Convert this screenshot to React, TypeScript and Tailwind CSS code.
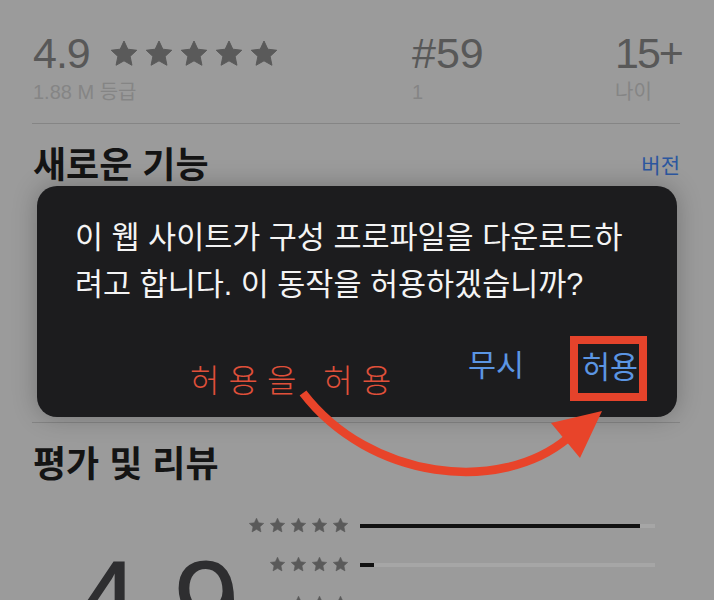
import React from "react";

const Star = ({ size, color }: { size: number; color: string }) => (
  <svg width={size} height={size} viewBox="0 0 24 24">
    <path
      d="M12 1.6l3.05 6.55 7.15.85-5.3 4.9 1.45 7.1L12 17.45 5.65 21l1.45-7.1-5.3-4.9 7.15-.85z"
      fill={color}
      stroke={color}
      strokeWidth="0.8"
      strokeLinejoin="round"
    />
  </svg>
);

const StarRow = ({ n }: { n: number }) => (
  <div className="flex justify-end gap-[4px]">
    {Array.from({ length: n }).map((_, i) => (
      <Star key={i} size={17} color="#5a5a5a" />
    ))}
  </div>
);

export default function App() {
  return (
    <div className="relative w-[714px] h-[600px] overflow-hidden bg-[#9b9b9b] font-['Liberation_Sans','Noto_Sans_CJK_KR',sans-serif]">
      <div className="px-[33px] pt-[32px]">
        {/* Stats row */}
        <div className="grid grid-cols-[379px_203px_1fr] pb-[21px] border-b border-[#858585] mr-[1px] -ml-[1px] pl-[1px]">
          <div>
            <div className="flex items-center gap-[19px]">
              <span className="text-[43px] leading-[43px] tracking-[-1px] text-[#585858]">4.9</span>
              <div className="flex gap-[5px]">
                {Array.from({ length: 5 }).map((_, i) => (
                  <Star key={i} size={30} color="#5a5a5a" />
                ))}
              </div>
            </div>
            <div className="mt-[7px] text-[20px] leading-[20px] text-[#858585]">1.88 M 등급</div>
          </div>
          <div>
            <div className="text-[43px] leading-[43px] text-[#585858]">#59</div>
            <div className="mt-[7px] text-[20px] leading-[20px] text-[#858585]">1</div>
          </div>
          <div>
            <div className="text-[43px] leading-[43px] tracking-[-2px] text-[#585858]">15+</div>
            <div className="mt-[7px] text-[20px] leading-[20px] text-[#858585]">나이</div>
          </div>
        </div>

        {/* What's new section */}
        <div className="h-[299px] border-b border-[#858585] -ml-[1px] mr-[1px]">
          <div className="flex justify-between items-start pt-[24px] pl-[1px]">
            <span className="text-[36px] leading-[36px] font-bold text-[#141414]">새로운 기능</span>
            <span className="mt-[7px] text-[21px] leading-[21px] text-[#2c57a0]">버전</span>
          </div>
        </div>

        {/* Ratings section */}
        <div className="pt-[24px]">
          <div className="text-[36px] leading-[36px] font-bold text-[#141414]">평가 및 리뷰</div>
          <div className="flex mt-[34px]">
            <div className="w-[211px] pl-[40px] pt-[26px]">
              <span className="text-[120px] leading-[120px] text-[#2e2e30]">4.9</span>
            </div>
            <div className="flex flex-col gap-[22px]">
              {[
                { n: 5, fill: 280 },
                { n: 4, fill: 14 },
                { n: 3, fill: 4 },
              ].map((r, i) => (
                <div key={i} className="flex items-center gap-[11px]">
                  <div className="w-[105px]">
                    <StarRow n={r.n} />
                  </div>
                  <div className="relative w-[295px] h-[4px] bg-[#a6a6a6]">
                    <div className="h-full bg-[#111111]" style={{ width: r.fill }} />
                  </div>
                </div>
              ))}
            </div>
          </div>
        </div>
      </div>

      {/* Dialog overlay */}
      <div className="absolute left-[37px] top-[186px] w-[640px] h-[231px] rounded-[20px] bg-[#1c1c1e] shadow-[0_0_24px_rgba(0,0,0,0.25)] font-['Liberation_Sans','Noto_Sans_CJK_KR',sans-serif]">
        <div className="pl-[38px] pt-[28px] text-[30.5px] leading-[47px] text-[#f4f4f4]">
          <div>이 웹 사이트가 구성 프로파일을 다운로드하</div>
          <div>려고 합니다. 이 동작을 허용하겠습니까?</div>
        </div>
        <div className="flex items-start mt-[28px] pl-[153px]">
          <span className="mt-[29px] text-[32px] leading-[32px] font-light tracking-[9px] text-[#e0503a]">허용을 허용</span>
          <span className="ml-auto mt-[14px] text-[30.5px] leading-[30px] text-[#5b95e3]">무시</span>
          <div className="ml-[46px] mr-[30px] w-[77px] h-[65px] border-[8px] border-[#e5432b] pl-[4px] pt-[8px]">
            <span className="block text-[30.5px] leading-[30px] text-[#5b95e3] whitespace-nowrap">허용</span>
          </div>
        </div>
      </div>

      {/* Arrow annotation */}
      <svg className="absolute left-0 top-0 pointer-events-none" width="714" height="600" viewBox="0 0 714 600">
        <path d="M303 393 C 370 480, 500 495, 568 438" fill="none" stroke="#e8442a" strokeWidth="8.5" strokeLinecap="butt" />
        <polygon points="602,411 551,423 580,458" fill="#e8442a" />
      </svg>
    </div>
  );
}
